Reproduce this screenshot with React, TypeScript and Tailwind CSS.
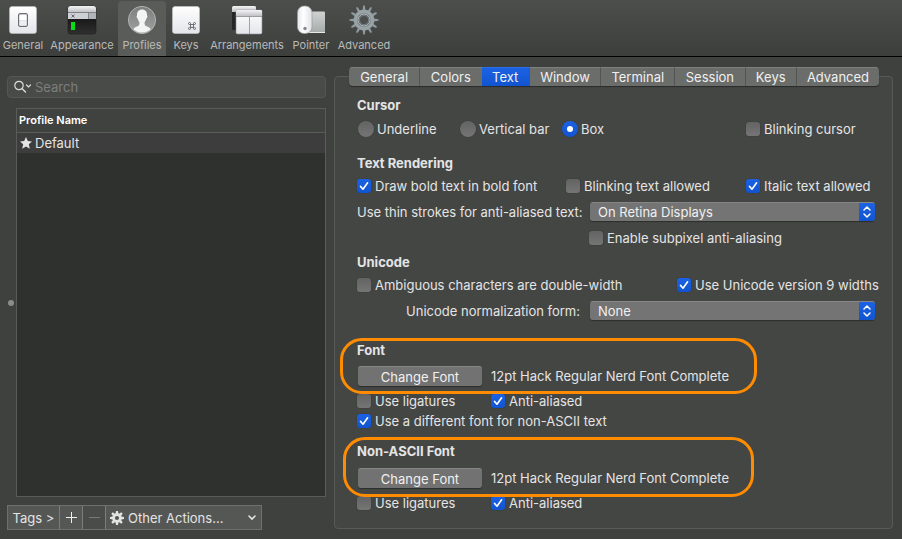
import { useState, type ReactNode } from 'react';

const GeneralIcon = () => (
  <svg width="30" height="30" viewBox="0 0 30 30" aria-hidden="true">
    <defs>
      <linearGradient id="plate" x1="0" y1="0" x2="0" y2="1">
        <stop offset="0" stopColor="#ffffff" />
        <stop offset="1" stopColor="#e4e5ea" />
      </linearGradient>
    </defs>
    <rect x="1.500" y="1.500" width="27" height="27" rx="2.500" fill="url(#plate)" stroke="#b9babd" strokeWidth="0.600" />
    <rect x="10.500" y="8.500" width="9" height="13" rx="1.500" fill="#c9cbd0" stroke="#6c6e74" />
    <rect x="11.500" y="10" width="7" height="5.500" rx="0.800" fill="#fff" />
    <rect x="11.500" y="16" width="7" height="4.500" rx="0.800" fill="#eceef2" />
  </svg>
);

const AppearanceIcon = () => (
  <svg width="30" height="30" viewBox="0 0 30 30" aria-hidden="true">
    <defs>
      <linearGradient id="titlebar" x1="0" y1="0" x2="0" y2="1">
        <stop offset="0" stopColor="#f4f4f5" />
        <stop offset="1" stopColor="#bdbec2" />
      </linearGradient>
      <linearGradient id="screen" x1="0" y1="0" x2="0" y2="1">
        <stop offset="0" stopColor="#050505" />
        <stop offset="1" stopColor="#303030" />
      </linearGradient>
    </defs>
    <rect x="1" y="1" width="28" height="28" rx="2.500" fill="url(#screen)" stroke="#1c1c1c" strokeWidth="0.600" />
    <path d="M1 7.500V3.500A2.500 2.500 0 0 1 3.500 1H26.500A2.500 2.500 0 0 1 29 3.500V7.500Z" fill="url(#titlebar)" />
    <rect x="1" y="7.500" width="28" height="6.500" fill="#cfd0d5" />
    <rect x="21.500" y="7.500" width="7.500" height="6.500" fill="#b1b3ba" />
    <path d="M1 7.500H29M21.500 7.500V14" stroke="#77797f" strokeWidth="0.800" />
    <path d="M4.500 9.500L7.500 12.500M7.500 9.500L4.500 12.500" stroke="#66686e" />
    <rect x="4" y="17" width="4" height="8" fill="#08dc13" />
  </svg>
);

const ProfilesIcon = () => (
  <svg width="30" height="30" viewBox="0 0 30 30" aria-hidden="true">
    <defs>
      <linearGradient id="disc" x1="0" y1="0" x2="0" y2="1">
        <stop offset="0" stopColor="#7d7e7e" />
        <stop offset="1" stopColor="#a0a1a1" />
      </linearGradient>
      <clipPath id="disc-clip">
        <circle cx="15" cy="15" r="12.600" />
      </clipPath>
    </defs>
    <circle cx="15" cy="15" r="13.600" fill="url(#disc)" stroke="#b0b1b1" />
    <path
      clipPath="url(#disc-clip)"
      fill="#f4f4f4"
      d="M15 4.500C18.500 4.500 20.200 7 20 10.500C20.700 10.800 20.400 13 19.300 13.600C19 15.600 18 16.600 17.600 17.300C17.500 19.600 17.800 20.600 20 21.500C22.500 22.600 24 23.600 24.500 26V29H5.500V26C6 23.600 7.500 22.600 10 21.500C12.200 20.600 12.500 19.600 12.400 17.300C12 16.600 11 15.600 10.700 13.600C9.600 13 9.300 10.800 10 10.500C9.800 7 11.500 4.500 15 4.500Z"
    />
  </svg>
);

const KeysIcon = () => (
  <svg width="30" height="30" viewBox="0 0 30 30" aria-hidden="true">
    <rect x="1.500" y="1.500" width="27" height="27" rx="2.500" fill="url(#plate)" stroke="#c7c8cb" strokeWidth="0.600" />
    <g transform="translate(17 17)" fill="none" stroke="#686a70" strokeWidth="1">
      <path d="M2.500 2.500H5.500V5.500H2.500Z" />
      <path d="M2.500 2.500V1.500A1 1 0 1 0 1.500 2.500ZM5.500 2.500V1.500A1 1 0 1 1 6.500 2.500ZM2.500 5.500V6.500A1 1 0 1 1 1.500 5.500ZM5.500 5.500V6.500A1 1 0 1 0 6.500 5.500Z" />
    </g>
  </svg>
);

const ArrangementsIcon = () => (
  <svg width="32" height="30" viewBox="0 0 32 30" aria-hidden="true">
    <rect x="1" y="1" width="24" height="24" rx="1.500" fill="#262626" />
    <path d="M1 7V2.500A1.500 1.500 0 0 1 2.500 1H23.500A1.500 1.500 0 0 1 25 2.500V7Z" fill="url(#titlebar)" />
    <rect x="5" y="5" width="26" height="24" rx="1.500" fill="url(#plate)" stroke="#8e8f92" strokeWidth="0.600" />
    <path d="M5 11.500V6.500A1.500 1.500 0 0 1 6.500 5H29.500A1.500 1.500 0 0 1 31 6.500V11.500Z" fill="url(#titlebar)" />
    <path d="M5 11.500H31M18.500 11.500V29" stroke="#8b8d91" strokeWidth="0.800" />
  </svg>
);

const PointerIcon = () => (
  <svg width="30" height="30" viewBox="0 0 30 30" aria-hidden="true">
    <defs>
      <linearGradient id="trackpad" x1="0" y1="0" x2="0" y2="1">
        <stop offset="0" stopColor="#cfd2d1" />
        <stop offset="1" stopColor="#a6abaa" />
      </linearGradient>
      <linearGradient id="mouse" x1="0" y1="0" x2="1" y2="0">
        <stop offset="0" stopColor="#e5e6eb" />
        <stop offset="0.400" stopColor="#ffffff" />
        <stop offset="1" stopColor="#e0e1e6" />
      </linearGradient>
    </defs>
    <rect x="12" y="6.500" width="17" height="21" rx="1" fill="url(#trackpad)" />
    <path d="M12 27.500H29" stroke="#e6e9e8" />
    <rect x="1.500" y="1" width="14.500" height="27.500" rx="6.500" fill="url(#mouse)" stroke="#9a9b9e" strokeWidth="0.700" />
    <circle cx="9" cy="23.500" r="1.700" fill="#85878c" />
  </svg>
);

const teeth = [0, 30, 60, 90, 120, 150, 180, 210, 240, 270, 300, 330];

const AdvancedIcon = () => (
  <svg width="30" height="30" viewBox="0 0 30 30" aria-hidden="true">
    <g fill="#8f9a9e">
      {teeth.map((angle) => (
        <path key={angle} d="M13.600 5L14.200 0.500H15.800L16.400 5Z" transform={`rotate(${angle} 15 15)`} />
      ))}
    </g>
    <circle cx="15" cy="15" r="8.600" fill="#51575a" stroke="#98a3a7" strokeWidth="3.600" />
    <circle cx="15" cy="15" r="6" fill="#4a4e4e" stroke="#c3cbcd" strokeWidth="1" />
    <circle cx="15" cy="15" r="4.700" fill="#4c4f4e" stroke="#727b7f" strokeWidth="1.200" />
  </svg>
);

const toolbar: { label: string; width: string; icon: ReactNode }[] = [
  { label: 'General', width: 'w-[46px]', icon: <GeneralIcon /> },
  { label: 'Appearance', width: 'w-[72px]', icon: <AppearanceIcon /> },
  { label: 'Profiles', width: 'w-12', icon: <ProfilesIcon /> },
  { label: 'Keys', width: 'w-10', icon: <KeysIcon /> },
  { label: 'Arrangements', width: 'w-[82px]', icon: <ArrangementsIcon /> },
  { label: 'Pointer', width: 'w-[46px]', icon: <PointerIcon /> },
  { label: 'Advanced', width: 'w-[60px]', icon: <AdvancedIcon /> },
];

const tabs = [
  { label: 'General', width: 'grow-[71]' },
  { label: 'Colors', width: 'grow-[62]' },
  { label: 'Text', width: 'grow-[48]' },
  { label: 'Window', width: 'grow-[71]' },
  { label: 'Terminal', width: 'grow-[74]' },
  { label: 'Session', width: 'grow-[70]' },
  { label: 'Keys', width: 'grow-[51]' },
  { label: 'Advanced', width: 'grow-[83]' },
];

function Check({ label, on = false, className = '' }: { label: string; on?: boolean; className?: string }) {
  return (
    <label className={`flex h-5 shrink-0 items-center gap-1 whitespace-nowrap ${className}`}>
      <span className="grid size-3.5 shrink-0">
        <input
          type="checkbox"
          defaultChecked={on}
          className="peer col-start-1 row-start-1 size-3.5 appearance-none rounded-[3px] bg-linear-to-b from-[#626362] to-[#747574] shadow-[0_0_1px_rgba(0,0,0,0.5)] checked:from-[#1b62e4] checked:to-[#1254cf]"
        />
        <svg
          viewBox="0 0 14 14"
          className="pointer-events-none invisible col-start-1 row-start-1 size-3.5 peer-checked:visible"
          aria-hidden="true"
        >
          <path d="M3.500 7.400L6 10.200L10.600 3.800" fill="none" stroke="#fff" strokeWidth="1.600" strokeLinecap="round" strokeLinejoin="round" />
        </svg>
      </span>
      {label}
    </label>
  );
}

function Radio({ label, on = false }: { label: string; on?: boolean }) {
  return (
    <label className="flex h-5 w-[102px] shrink-0 items-center gap-[3px] whitespace-nowrap pl-px">
      <span className="grid size-4 shrink-0 place-items-center">
        <input
          type="radio"
          name="cursor"
          defaultChecked={on}
          className="peer col-start-1 row-start-1 size-4 appearance-none rounded-full bg-linear-to-b from-[#626362] to-[#747574] shadow-[0_0_1px_rgba(0,0,0,0.5)] checked:from-[#1b62e4] checked:to-[#1254cf]"
        />
        <span className="pointer-events-none invisible col-start-1 row-start-1 size-1.5 rounded-full bg-white peer-checked:visible" />
      </span>
      {label}
    </label>
  );
}

function SelectRow({ id, label, options }: { id: string; label: string; options: string[] }) {
  return (
    <div className="mt-1.5 flex h-5 items-start gap-2.5">
      <label htmlFor={id} className="w-[223px] shrink-0 whitespace-nowrap text-right">
        {label}
      </label>
      <div className="grid h-[19px] flex-1 overflow-hidden rounded-[3px] border-t border-[#868686] shadow-[0_1px_1px_rgba(0,0,0,0.35)]">
        <select id={id} className="col-start-1 row-start-1 appearance-none bg-[#747474] pl-2 leading-[18px] text-[#f0f0f0]">
          {options.map((option) => (
            <option key={option}>{option}</option>
          ))}
        </select>
        <span className="pointer-events-none col-start-1 row-start-1 flex w-4 items-center justify-center justify-self-end bg-linear-to-b from-[#1b62e4] to-[#1254cf]">
          <svg width="10" height="14" viewBox="0 0 10 14" aria-hidden="true">
            <path d="M2 5L5 2L8 5M2 9L5 12L8 9" fill="none" stroke="#fff" strokeWidth="1.500" strokeLinecap="round" strokeLinejoin="round" />
          </svg>
        </span>
      </div>
    </div>
  );
}

function ChangeFont() {
  return (
    <div className="flex h-5 items-center gap-[9px] pl-px">
      <button className="h-5 w-[124px] rounded-[3px] border-t border-[#868686] bg-[#727272] leading-[18px] text-[#f0f0f0] shadow-[0_1px_1px_rgba(0,0,0,0.35)]">
        Change Font
      </button>
      <span className="whitespace-nowrap">12pt Hack Regular Nerd Font Complete</span>
    </div>
  );
}

export default function App() {
  const [tab, setTab] = useState('Text');
  return (
    <div className="flex min-h-screen flex-col bg-[#3f413f] font-['Inter','Liberation_Sans',sans-serif] text-[13px] leading-5 text-[#e4e4e4]">
      <header className="flex h-[57px] border-b border-black bg-linear-to-b from-[#4c4e4c] to-[#3d3f3d]">
        {toolbar.map(({ label, width, icon }) => (
          <button
            key={label}
            className={`flex shrink-0 flex-col items-center whitespace-nowrap text-[11px] leading-5 text-[#b8b9b8] ${width} ${
              label === 'Profiles' ? 'mt-px rounded-t bg-[#5a5c5a] pt-1' : 'pt-[5px]'
            }`}
          >
            {icon}
            <span>{label}</span>
          </button>
        ))}
      </header>

      <main className="flex flex-1 gap-2 pt-[19px] pr-[9px] pb-[9px] pl-[7px]">
        <aside className="flex w-[319px] shrink-0 flex-col">
          <label className="flex h-[22px] items-center rounded border border-[#555755] bg-[#494b49] pl-1.5">
            <svg width="18" height="14" viewBox="0 0 18 14" fill="none" stroke="#dcdcdc" strokeLinecap="round" aria-hidden="true">
              <circle cx="5" cy="5.500" r="4.200" strokeWidth="1.200" />
              <path d="M8.200 8.800L11.500 12" strokeWidth="1.400" />
              <path d="M12.500 5L14.500 7L16.500 5" strokeWidth="1.200" />
            </svg>
            <input
              type="text"
              aria-label="Search"
              placeholder="Search"
              className="ml-[3px] min-w-0 flex-1 bg-transparent outline-none placeholder:text-[#7c7e7c]"
            />
          </label>

          <div className="mt-2.5 flex flex-1">
            <span className="flex w-[9px] shrink-0 items-center pl-px">
              <span className="size-1.5 shrink-0 rounded-full bg-[#8b8c8b]" />
            </span>
            <div className="flex-1 border border-[#5a5c5a] bg-[#2f312f]">
              <table className="w-full border-collapse text-left">
                <thead>
                  <tr className="h-[23px] border-b border-[#5a5c5a] bg-[#404240]">
                    <th className="pl-0.5 text-[11px] font-semibold text-white">Profile Name</th>
                  </tr>
                </thead>
                <tbody>
                  <tr className="bg-[#3e3d3d]">
                    <td>
                      <span className="flex h-5 items-center gap-[3px] pl-[3px]">
                        <svg width="12" height="12" viewBox="0 0 12 12" aria-hidden="true">
                          <path fill="#e4e4e4" d="M6 0L7.800 4L12 4.400L8.800 7.300L9.800 11.700L6 9.400L2.200 11.700L3.200 7.300L0 4.400L4.200 4Z" />
                        </svg>
                        Default
                      </span>
                    </td>
                  </tr>
                </tbody>
              </table>
            </div>
          </div>

          <div className="mt-2 flex h-[25px] w-[255px] divide-x divide-[#7c7e7c] border border-[#6e706e] bg-[#555755]">
            <button className="w-[52px] whitespace-nowrap">Tags &gt;</button>
            <button aria-label="Add profile" className="flex w-[23px] items-center justify-center">
              <svg width="11" height="11" viewBox="0 0 11 11" aria-hidden="true">
                <path d="M5.500 0V11M0 5.500H11" stroke="#f0f0f0" />
              </svg>
            </button>
            <button aria-label="Remove profile" className="flex w-[23px] items-center justify-center bg-[#4a4c4a]">
              <svg width="11" height="11" viewBox="0 0 11 11" aria-hidden="true">
                <path d="M0 5.500H11" stroke="#777977" />
              </svg>
            </button>
            <button className="flex flex-1 items-center gap-1 whitespace-nowrap pr-[5px] pl-1">
              <svg width="14" height="14" viewBox="0 0 14 14" aria-hidden="true">
                <g fill="#e4e4e4">
                  {[0, 45, 90, 135, 180, 225, 270, 315].map((angle) => (
                    <path key={angle} d="M5.500 3L6 0H8L8.500 3Z" transform={`rotate(${angle} 7 7)`} />
                  ))}
                </g>
                <circle cx="7" cy="7" r="3.400" fill="none" stroke="#e4e4e4" strokeWidth="2.600" />
              </svg>
              Other Actions...
              <svg width="8" height="6" viewBox="0 0 8 6" className="ml-auto" aria-hidden="true">
                <path d="M1 1L4 4L7 1" fill="none" stroke="#e4e4e4" strokeWidth="1.600" strokeLinecap="round" />
              </svg>
            </button>
          </div>
        </aside>

        <section className="mb-px min-w-0 flex-1 rounded border border-[#585a58] bg-[#444644]">
          <div className="-mt-2.5 mr-[13px] ml-[14px] flex h-[19px] overflow-hidden rounded-[4px] bg-[#6b6d6b] shadow-[0_1px_1px_rgba(0,0,0,0.4)]">
            {tabs.map(({ label, width }, i) => (
              <button
                key={label}
                onClick={() => setTab(label)}
                className={`basis-0 border-t leading-[17px] text-[#f0f0f0] ${width} ${
                  tab === label ? 'border-t-[#2a6ee8] bg-linear-to-b from-[#1b62e4] to-[#1254cf]' : 'border-t-[#7e807e]'
                } ${i > 0 && tab !== label ? 'border-l border-l-[#535553]' : ''}`}
              >
                {label}
              </button>
            ))}
          </div>

          <div className="pt-[9px] pr-[17px] pb-3.5 pl-[22px]">
            <h2 className="font-bold">Cursor</h2>
            <div className="mt-1 flex">
              <Radio label="Underline" />
              <Radio label="Vertical bar" />
              <Radio label="Box" on />
              <Check label="Blinking cursor" className="ml-auto w-[129px]" />
            </div>

            <h2 className="mt-3.5 font-bold">Text Rendering</h2>
            <div className="mt-[3px] flex">
              <Check label="Draw bold text in bold font" on className="w-[209px]" />
              <Check label="Blinking text allowed" />
              <Check label="Italic text allowed" on className="ml-auto w-[129px]" />
            </div>
            <SelectRow
              id="thin-strokes"
              label="Use thin strokes for anti-aliased text:"
              options={['On Retina Displays', 'Always', 'Never']}
            />
            <Check label="Enable subpixel anti-aliasing" className="mt-1.5 ml-[232px]" />

            <h2 className="mt-1 font-bold">Unicode</h2>
            <div className="mt-[3px] flex">
              <Check label="Ambiguous characters are double-width" />
              <Check label="Use Unicode version 9 widths" on className="ml-auto w-[198px]" />
            </div>
            <SelectRow id="normalization" label="Unicode normalization form:" options={['None', 'NFC', 'NFD']} />

            <div className="relative mt-[19px]">
              <h2 className="mb-1.5 font-bold">Font</h2>
              <ChangeFont />
              <div className="mt-[5px] flex">
                <Check label="Use ligatures" className="w-[134px]" />
                <Check label="Anti-aliased" on />
              </div>
              <Check label="Use a different font for non-ASCII text" on />
              <div className="pointer-events-none absolute -top-0.5 -left-[17px] h-14 w-[417px] rounded-[22px] border-3 border-[#ff8c00]" />
            </div>

            <div className="relative mt-2.5">
              <h2 className="mb-[7px] font-bold">Non-ASCII Font</h2>
              <ChangeFont />
              <div className="mt-[5px] flex">
                <Check label="Use ligatures" className="w-[134px]" />
                <Check label="Anti-aliased" on />
              </div>
              <div className="pointer-events-none absolute -top-1 -left-[14px] h-[60px] w-[411px] rounded-[22px] border-3 border-[#ff8c00]" />
            </div>
          </div>
        </section>
      </main>
    </div>
  );
}
